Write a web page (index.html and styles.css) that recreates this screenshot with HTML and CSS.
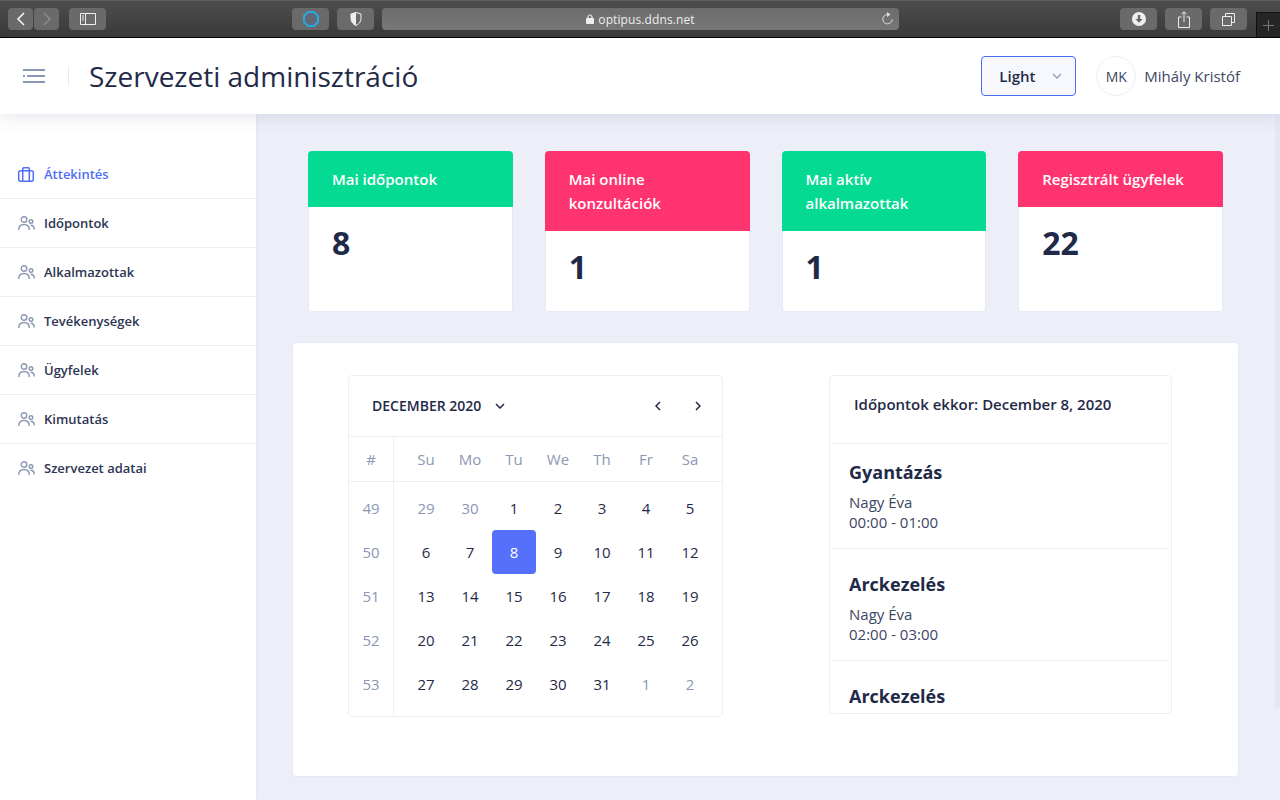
FILE: index.html
```html
<!DOCTYPE html>
<html lang="hu">

<head>
    <meta charset="UTF-8">
    <meta name="viewport" content="width=device-width, initial-scale=1.0">
    <title>Szervezeti adminisztráció</title>
    <link rel="stylesheet" href="styles.css">
</head>

<body>
    <!-- browser toolbar -->
    <div class="toolbar">
        <div class="tb-btn tb-nav"><svg width="12" height="16" viewBox="0 0 12 16"><path d="M9 2 3 8l6 6" fill="none" stroke="#f2f2f2" stroke-width="1.6"/></svg></div>
        <div class="tb-btn tb-nav tb-next"><svg width="12" height="16" viewBox="0 0 12 16"><path d="m3 2 6 6-6 6" fill="none" stroke="#8f8f8f" stroke-width="1.4"/></svg></div>
        <div class="tb-btn tb-wide tb-sidebar"><svg width="16" height="12" viewBox="0 0 16 12"><path d="M.5.5h15v11H.5zM5.5.5v11" fill="none" stroke="#efefef"/><path d="M2 3h2M2 5h2M2 7h2" stroke="#efefef"/></svg></div>
        <div class="tb-btn tb-wide tb-ext"><svg width="16" height="16" viewBox="0 0 16 16"><path d="M5 1h6l4 4v6l-4 4H5l-4-4V5z" fill="#5f6a75" stroke="#2aa8e0" stroke-width="2"/></svg></div>
        <div class="tb-btn tb-wide tb-shield"><svg width="12" height="14" viewBox="0 0 12 14"><path d="M6 .5 11 2v4.500c0 3.500-2.500 6-5 7-2.500-1-5-3.500-5-7V2z" fill="none" stroke="#eee"/><path d="M6 .5 1 2v4.500c0 3.500 2.500 6 5 7z" fill="#eee"/></svg></div>
        <div class="tb-url">
            <svg class="tb-lock" width="8" height="10" viewBox="0 0 8 10"><path d="M2 4.500V3a2 2 0 0 1 4 0v1.500" fill="none" stroke="#eee" stroke-width="1.200"/><rect y="4" width="8" height="6" rx="1" fill="#eee"/></svg>
            <span>optipus.ddns.net</span>
            <svg class="tb-reload" width="12" height="13" viewBox="0 0 12 13"><path d="M6.500 2.500a4.700 4.700 0 1 0 4.700 4.700" fill="none" stroke="#ddd"/><path d="M6 0l3.500 2.500L6 5z" fill="#ddd"/></svg>
        </div>
        <div class="tb-btn tb-wide tb-down"><svg width="14" height="14" viewBox="0 0 14 14"><circle cx="7" cy="7" r="7" fill="#eee"/><path d="M5.800 3h2.400v4H10.500L7 10.800 3.500 7h2.300z" fill="#666"/></svg></div>
        <div class="tb-btn tb-wide tb-share"><svg width="12" height="17" viewBox="0 0 12 17"><path d="M3.500 6H.5v10.500h11V6h-3M6 11V1M3.500 3.200 6 .8l2.500 2.400" fill="none" stroke="#eee"/></svg></div>
        <div class="tb-btn tb-wide tb-tabs"><svg width="13" height="13" viewBox="0 0 13 13"><path d="M.5 3.500h9v9h-9zM3.500 3.500v-3h9v9h-3" fill="none" stroke="#eee"/></svg></div>
        <div class="tb-plus"><svg width="11" height="11" viewBox="0 0 11 11"><path d="M5.500 0v11M0 5.500h11" stroke="#777"/></svg></div>
    </div>

    <header class="topbar">
        <svg class="burger" width="22" height="14" viewBox="0 0 22 14"><path d="M0 1h22M4 7h18M0 13h22M0 7h2" stroke="#8a97b6" stroke-width="2"/></svg>
        <h1 class="page-title">Szervezeti adminisztráció</h1>
        <div class="theme-select">
            <span>Light</span>
            <svg width="10" height="6" viewBox="0 0 10 6"><path d="m1 1 4 4 4-4" fill="none" stroke="#98a2bd" stroke-width="1.500"/></svg>
        </div>
        <div class="avatar">MK</div>
        <div class="user-name">Mihály Kristóf</div>
    </header>

    <div class="layout">
        <nav class="sidebar">
            <a class="nav-item active">
                <svg width="16" height="15" viewBox="0 0 16 15"><rect x=".7" y="3.700" width="14.600" height="10.600" rx="2" fill="none" stroke="currentColor" stroke-width="1.500"/><path d="M4.700 14V2a1.300 1.300 0 0 1 1.300-1.300h4A1.300 1.300 0 0 1 11.300 2v12" fill="none" stroke="currentColor" stroke-width="1.500"/></svg>
                Áttekintés
            </a>
            <a class="nav-item"><svg width="17" height="15" viewBox="0 0 17 15"><use href="#people"/></svg>Időpontok</a>
            <a class="nav-item"><svg width="17" height="15" viewBox="0 0 17 15"><use href="#people"/></svg>Alkalmazottak</a>
            <a class="nav-item"><svg width="17" height="15" viewBox="0 0 17 15"><use href="#people"/></svg>Tevékenységek</a>
            <a class="nav-item"><svg width="17" height="15" viewBox="0 0 17 15"><use href="#people"/></svg>Ügyfelek</a>
            <a class="nav-item"><svg width="17" height="15" viewBox="0 0 17 15"><use href="#people"/></svg>Kimutatás</a>
            <a class="nav-item"><svg width="17" height="15" viewBox="0 0 17 15"><use href="#people"/></svg>Szervezet adatai</a>
        </nav>

        <main class="content">
            <div class="stats">
                <div class="stat">
                    <div class="stat-head green">Mai időpontok</div>
                    <div class="stat-num">8</div>
                </div>
                <div class="stat">
                    <div class="stat-head pink">Mai online konzultációk</div>
                    <div class="stat-num">1</div>
                </div>
                <div class="stat">
                    <div class="stat-head green">Mai aktív alkalmazottak</div>
                    <div class="stat-num">1</div>
                </div>
                <div class="stat">
                    <div class="stat-head pink">Regisztrált ügyfelek</div>
                    <div class="stat-num">22</div>
                </div>
            </div>

            <section class="panel">
                <div class="calendar">
                    <div class="cal-head">
                        <span class="cal-month">DECEMBER 2020</span>
                        <svg class="cal-caret" width="10" height="6" viewBox="0 0 10 6"><path d="m1 1 4 4 4-4" fill="none" stroke="#1f2a48" stroke-width="1.500"/></svg>
                        <svg class="cal-prev" width="6" height="10" viewBox="0 0 6 10"><path d="M5 1 1 5l4 4" fill="none" stroke="#1f2a48" stroke-width="1.500"/></svg>
                        <svg class="cal-next" width="6" height="10" viewBox="0 0 6 10"><path d="m1 1 4 4-4 4" fill="none" stroke="#1f2a48" stroke-width="1.500"/></svg>
                    </div>
                    <div class="cal-body">
                        <div class="cal-weeks">
                            <div class="cal-wk-head">#</div>
                            <div class="cal-wk">49</div>
                            <div class="cal-wk">50</div>
                            <div class="cal-wk">51</div>
                            <div class="cal-wk">52</div>
                            <div class="cal-wk">53</div>
                        </div>
                        <div class="cal-main">
                            <div class="cal-days">
                                <span>Su</span><span>Mo</span><span>Tu</span><span>We</span><span>Th</span><span>Fr</span><span>Sa</span>
                            </div>
                            <div class="cal-grid">
                                <span class="off">29</span><span class="off">30</span><span>1</span><span>2</span><span>3</span><span>4</span><span>5</span>
                                <span>6</span><span>7</span><span class="sel">8</span><span>9</span><span>10</span><span>11</span><span>12</span>
                                <span>13</span><span>14</span><span>15</span><span>16</span><span>17</span><span>18</span><span>19</span>
                                <span>20</span><span>21</span><span>22</span><span>23</span><span>24</span><span>25</span><span>26</span>
                                <span>27</span><span>28</span><span>29</span><span>30</span><span>31</span><span class="off">1</span><span class="off">2</span>
                            </div>
                        </div>
                    </div>
                </div>

                <div class="appts">
                    <div class="appts-title">Időpontok ekkor: December 8, 2020</div>
                    <div class="appt first">
                        <h3>Gyantázás</h3>
                        <p>Nagy Éva</p>
                        <p>00:00 - 01:00</p>
                    </div>
                    <div class="appt">
                        <h3>Arckezelés</h3>
                        <p>Nagy Éva</p>
                        <p>02:00 - 03:00</p>
                    </div>
                    <div class="appt">
                        <h3>Arckezelés</h3>
                    </div>
                </div>
            </section>
        </main>
    </div>

    <div class="scroll-track"></div>

    <svg class="defs" width="0" height="0">
        <symbol id="people" viewBox="0 0 17 15">
            <circle cx="6" cy="3.500" r="2.800" fill="none" stroke="#8c97b3" stroke-width="1.400"/>
            <circle cx="13" cy="5.500" r="1.800" fill="none" stroke="#8c97b3" stroke-width="1.400"/>
            <path d="M.7 14c0-3.500 2.300-5.500 5.300-5.500s5.300 2 5.300 5.500M12.500 9.300c2.300 0 3.800 1.700 3.800 4.200" fill="none" stroke="#8c97b3" stroke-width="1.400"/>
        </symbol>
    </svg>
</body>

</html>
```

FILE: styles.css
```css
* {
    margin: 0;
    padding: 0;
    box-sizing: border-box;
}

body {
    width: 1280px;
    height: 800px;
    overflow: hidden;
    background: #eceff8;
    color: #1f2a48;
    font-family: "Open Sans", "Noto Sans", sans-serif;
    display: flex;
    flex-direction: column;
}

.defs {
    position: absolute;
}

/* browser toolbar */
.toolbar {
    height: 38px;
    flex: none;
    display: flex;
    padding: 7px 0 0 8px;
    background: linear-gradient(#4d4d4d, #3a3a3a);
    border-top: 1px solid #5e5e5e;
    border-bottom: 1px solid #000;
}

.tb-btn {
    height: 22px;
    background: #6a6a6a;
    border-radius: 4px;
    display: flex;
    align-items: center;
    justify-content: center;
}

.tb-nav {
    width: 25px;
}

.tb-next {
    margin-left: 1px;
}

.tb-wide {
    width: 37px;
}

.tb-sidebar {
    margin-left: 10px;
}

.tb-ext {
    margin-left: 186px;
}

.tb-shield {
    margin-left: 8px;
}

.tb-url {
    width: 517px;
    height: 22px;
    margin-left: 8px;
    background: linear-gradient(#6c6c6c, #777);
    border-radius: 4px;
    color: #eee;
    font-size: 12px;
    letter-spacing: .1px;
    display: flex;
    align-items: center;
    justify-content: center;
    gap: 4px;
    position: relative;
}

.tb-reload {
    position: absolute;
    right: 6px;
    top: 4px;
}

.tb-down {
    margin-left: 221px;
}

.tb-share,
.tb-tabs {
    margin-left: 8px;
}

.tb-plus {
    width: 24px;
    height: 25px;
    margin-left: 9px;
    margin-top: 4px;
    background: #262626;
    border-left: 1px solid #111;
    border-top: 1px solid #111;
    display: flex;
    align-items: center;
    justify-content: center;
}

/* top bar */
.topbar {
    height: 76px;
    flex: none;
    background: #fff;
    display: flex;
    align-items: center;
    padding: 0 40px 0 23px;
    box-shadow: 0 4px 16px rgba(60, 70, 110, .12);
    position: relative;
    z-index: 2;
}

.burger {
    flex: none;
}

.page-title {
    font-size: 28px;
    font-weight: 400;
    line-height: 38px;
    margin-left: 23px;
    padding-left: 21px;
    position: relative;
    flex: 1;
}

.page-title::before {
    content: "";
    position: absolute;
    left: 0;
    top: 9px;
    height: 20px;
    border-left: 1px solid #e8ebf4;
}

.theme-select {
    width: 95px;
    height: 40px;
    background: #f7f8fd;
    border: 1px solid #4a6cf7;
    border-radius: 4px;
    display: flex;
    align-items: center;
    justify-content: space-between;
    padding: 0 13px 0 17px;
    font-size: 15px;
    font-weight: 600;
}

.avatar {
    width: 40px;
    height: 40px;
    margin-left: 20px;
    border: 1px solid #eceff8;
    border-radius: 50%;
    display: flex;
    align-items: center;
    justify-content: center;
    font-size: 14px;
    color: #3d4663;
}

.user-name {
    margin-left: 8px;
    font-size: 15px;
    color: #3d4663;
}

/* sidebar */
.layout {
    flex: 1;
    display: flex;
    min-height: 0;
}

.sidebar {
    width: 256px;
    flex: none;
    background: #fff;
    padding-top: 36px;
    box-shadow: 0 0 4px rgba(60, 70, 110, .08);
}

.nav-item {
    height: 49px;
    display: flex;
    align-items: center;
    gap: 9px;
    padding: 0 0 0 18px;
    font-size: 13px;
    font-weight: 600;
    color: #2c3552;
    border-bottom: 1px solid #eceff8;
}

.nav-item:last-child {
    border-bottom: 0;
    padding-bottom: 1px;
}

.nav-item.active {
    color: #4f6ef7;
    gap: 10px;
}

/* stat cards */
.content {
    flex: 1;
    padding: 37px 41px 0 36px;
}

.stats {
    display: grid;
    grid-template-columns: repeat(4, 1fr);
    gap: 32px;
    padding: 0 16px;
}

.stat {
    height: 161px;
    background: #fff;
    box-shadow: inset 0 0 0 1px #e6e9f3;
    border-radius: 4px;
    overflow: hidden;
}

.stat-head {
    padding: 16px 24px;
    color: #fff;
    font-size: 15px;
    font-weight: 600;
    line-height: 24px;
}

.green {
    background: #05da92;
}

.pink {
    background: #ff336f;
}

.stat-num {
    padding: 14px 24px;
    font-size: 32px;
    font-weight: 700;
    line-height: 44px;
}

/* calendar panel */
.panel {
    height: 435px;
    margin-top: 30px;
    background: #fff;
    border: 1px solid #e6e9f3;
    border-radius: 4px;
    display: flex;
    justify-content: space-between;
    align-items: flex-start;
    padding: 32px 66px 0 55px;
}

.calendar {
    width: 375px;
    height: 342px;
    border: 1px solid #eceff8;
    border-radius: 4px;
}

.cal-head {
    height: 61px;
    display: flex;
    align-items: center;
    padding: 0 21px 0 23px;
    border-bottom: 1px solid #eceff8;
}

.cal-month {
    font-size: 14px;
    font-weight: 600;
    margin-top: -2px;
}

.cal-caret {
    margin-left: 14px;
}

.cal-prev {
    margin-left: auto;
}

.cal-next {
    margin-left: 34px;
}

.cal-body {
    display: flex;
    height: 279px;
}

.cal-weeks {
    width: 45px;
    flex: none;
    border-right: 1px solid #eceff8;
    text-align: center;
    font-size: 15px;
    color: #8c97b3;
}

.cal-wk-head {
    height: 45px;
    line-height: 44px;
    border-bottom: 1px solid #eceff8;
}

.cal-wk {
    height: 44px;
    line-height: 44px;
}

.cal-wk:nth-child(2) {
    margin-top: 4px;
}

.cal-main {
    flex: 1;
}

.cal-days {
    height: 45px;
    display: grid;
    grid-template-columns: repeat(7, 44px);
    padding-left: 10px;
    align-items: center;
    text-align: center;
    font-size: 15px;
    color: #8c97b3;
    border-bottom: 1px solid #eceff8;
}

.cal-grid {
    display: grid;
    grid-template-columns: repeat(7, 44px);
    grid-auto-rows: 44px;
    padding: 4px 0 0 10px;
    text-align: center;
    font-size: 15px;
    font-weight: 500;
    line-height: 44px;
}

.cal-grid .off {
    color: #8c97b3;
    font-weight: 400;
}

.cal-grid .sel {
    background: #5570fb;
    color: #fff;
    border-radius: 4px;
}

/* appointments */
.appts {
    width: 343px;
    height: 339px;
    border: 1px solid #eceff8;
    border-radius: 4px;
    overflow: hidden;
    padding: 0 3px;
}

.appts-title {
    height: 68px;
    padding: 17px 21px 0;
    font-size: 15px;
    font-weight: 600;
    line-height: 22px;
    border-bottom: 1px solid #eceff8;
}

.appt {
    height: 112px;
    padding: 23px 16px 0;
    border-bottom: 1px solid #eceff8;
    font-size: 15px;
    line-height: 20px;
    color: #3d4663;
}

.appt.first {
    height: 105px;
    padding-top: 16px;
}

.appt h3 {
    font-size: 18px;
    font-weight: 700;
    line-height: 24px;
    margin-bottom: 8px;
    color: #1f2a48;
}

/* page scrollbar */
.scroll-track {
    position: absolute;
    right: 0;
    top: 114px;
    width: 5px;
    height: 594px;
    background: #e5e8f3;
}
```
